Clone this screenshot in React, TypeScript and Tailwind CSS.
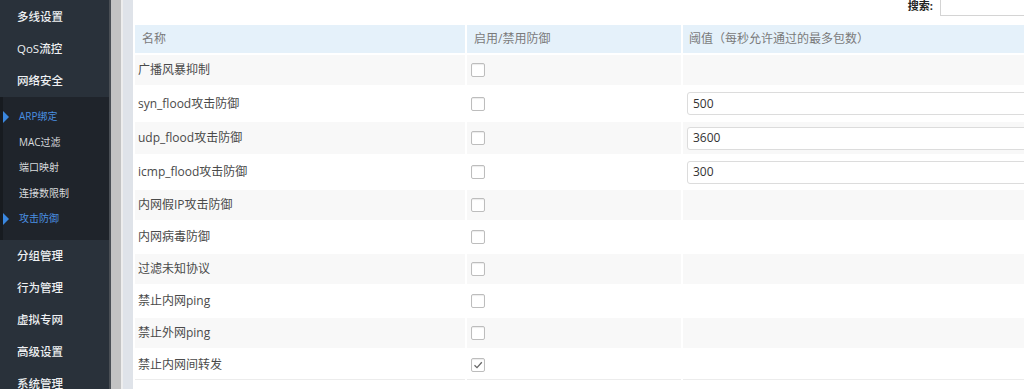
import React from "react";

const font = { fontFamily: "'Open Sans','Noto Sans CJK SC',sans-serif" };

const mainTop = ["多线设置", "QoS流控", "网络安全"];
const subItems: { label: string; active: boolean }[] = [
  { label: "ARP绑定", active: true },
  { label: "MAC过滤", active: false },
  { label: "端口映射", active: false },
  { label: "连接数限制", active: false },
  { label: "攻击防御", active: true },
];
const mainBottom = ["分组管理", "行为管理", "虚拟专网", "高级设置", "系统管理"];

const rows: { name: string; value?: string; checked?: boolean; h: string }[] = [
  { name: "广播风暴抑制", h: "h-[30px]" },
  { name: "syn_flood攻击防御", value: "500", h: "h-[33px]" },
  { name: "udp_flood攻击防御", value: "3600", h: "h-[32px]" },
  { name: "icmp_flood攻击防御", value: "300", h: "h-[32px]" },
  { name: "内网假IP攻击防御", h: "h-[30px]" },
  { name: "内网病毒防御", h: "h-[30px]" },
  { name: "过滤未知协议", h: "h-[30px]" },
  { name: "禁止内网ping", h: "h-[30px]" },
  { name: "禁止外网ping", h: "h-[30px]" },
  { name: "禁止内网间转发", checked: true, h: "h-[30px]" },
];

function Checkbox({ checked }: { checked?: boolean }) {
  return (
    <div className="w-[14px] h-[14px] border border-[#bdbdbd] rounded-[2px] bg-white shadow-[inset_0_1px_1px_rgba(0,0,0,0.08)] flex items-center justify-center">
      {checked && (
        <svg width="10" height="10" viewBox="0 0 10 10">
          <path d="M1.5 5.2 L4 7.6 L8.8 2.2" fill="none" stroke="#666" strokeWidth="1.3" />
        </svg>
      )}
    </div>
  );
}

export default function App() {
  return (
    <div className="flex h-[389px] w-[1024px] overflow-hidden bg-white" style={font}>
      {/* Sidebar */}
      <div className="w-[109px] shrink-0 bg-[#29313a] flex flex-col pt-[1px] overflow-hidden">
        {mainTop.map((t) => (
          <div key={t} className="h-[32px] shrink-0 flex items-center pl-[17px] text-[11.5px] text-[#eef0f2] font-medium">
            {t}
          </div>
        ))}
        <div className="shrink-0 bg-[#1f242b] border-l-[3px] border-[#171b20] pt-[7px] pb-[8px]">
          {subItems.map((s) => (
            <div key={s.label} className="relative h-[25.5px] flex items-center pl-[16px]">
              {s.active && (
                <span className="absolute left-0 top-1/2 -translate-y-1/2 w-0 h-0 border-y-[6px] border-y-transparent border-l-[6px] border-l-[#3a87e0]" />
              )}
              <span className={`text-[10px] ${s.active ? "text-[#4a90e2]" : "text-[#d8dadd]"}`}>{s.label}</span>
            </div>
          ))}
        </div>
        {mainBottom.map((t) => (
          <div key={t} className="h-[32px] shrink-0 flex items-center pl-[17px] text-[11.5px] text-[#eef0f2] font-medium">
            {t}
          </div>
        ))}
      </div>
      {/* separators */}
      <div className="w-[2px] shrink-0 bg-[#4a4f55]" />
      <div className="w-[10px] shrink-0 bg-[#c3c3c3]" />
      <div className="w-[2px] shrink-0 bg-[#ededed]" />
      <div className="w-[10px] shrink-0 bg-[#dfe3e9]" />
      {/* Content */}
      <div className="flex-1 min-w-0 overflow-hidden">
        <div className="flex justify-end items-center mt-[-12px] h-[28px] gap-[7px]">
          <span className="text-[11px] text-[#222] font-bold mt-[8px]">搜索:</span>
          <div className="w-[90px] h-[28px] border border-[#d4d4d4] bg-white shrink-0 mr-[-6px]" />
        </div>
        <table className="mt-[7px] border-separate border-spacing-[2px] w-[1000px] table-fixed text-[12px]">
          <colgroup>
            <col className="w-[330px]" />
            <col className="w-[214px]" />
            <col />
          </colgroup>
          <thead>
            <tr className="bg-[#e5f1fa] h-[28px]">
              <th className="text-left font-normal text-[#7a7a7a] pl-[7px]">名称</th>
              <th className="text-left font-normal text-[#7a7a7a] pl-[7px]">启用/禁用防御</th>
              <th className="text-left font-normal text-[#7a7a7a] pl-[6px]">阈值（每秒允许通过的最多包数）</th>
            </tr>
          </thead>
          <tbody>
            {rows.map((r, i) => {
              const gray = i % 2 === 0;
              const last = i === rows.length - 1;
              const cell = `${gray ? "bg-[#f8f8f8]" : "bg-white"} ${last ? "border-b border-[#ececec]" : ""}`;
              return (
                <tr key={r.name} className={r.h}>
                  <td className={`${cell} pl-[3px] text-[#4a4a4a]`}>{r.name}</td>
                  <td className={`${cell} pl-[4px]`}>
                    <Checkbox checked={r.checked} />
                  </td>
                  <td className={`${cell} pl-[4px]`}>
                    {r.value && (
                      <div className="h-[23px] w-[400px] border border-[#dcdcdc] rounded-[3px] bg-white flex items-center pl-[5px] text-[12px] text-[#333]">
                        {r.value}
                      </div>
                    )}
                  </td>
                </tr>
              );
            })}
          </tbody>
        </table>
      </div>
    </div>
  );
}
